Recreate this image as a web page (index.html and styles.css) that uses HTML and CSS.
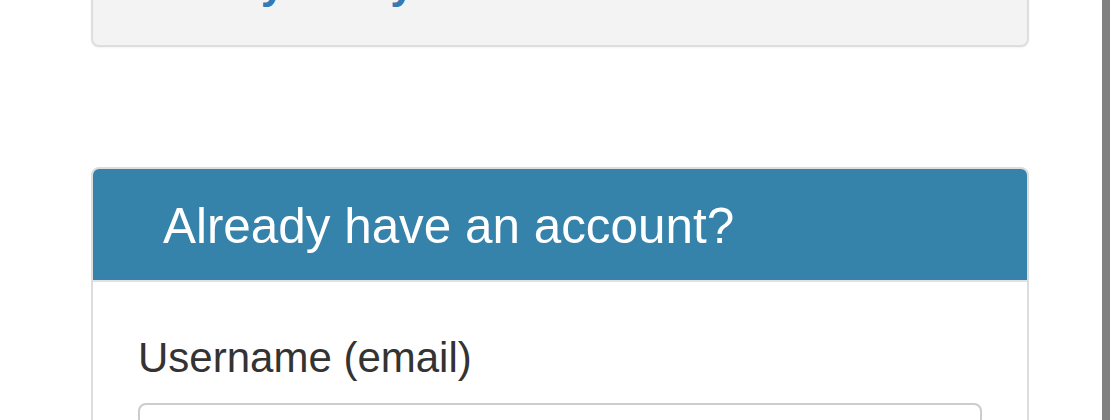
FILE: index.html
```html
<!DOCTYPE html>
<html lang="en">
<head>
<meta charset="utf-8">
<title>Login</title>
<link rel="stylesheet" href="styles.css">
</head>
<body>
<div class="page">
  <div class="well">
    <h2 class="well-title"><a href="#">Study today</a></h2>
  </div>
  <div class="panel">
    <div class="panel-heading">
      <h3 class="panel-title">Already have an account?</h3>
    </div>
    <div class="panel-body">
      <label class="field-label" for="user">Username (email)</label>
      <input class="field-input" id="user" type="text">
    </div>
  </div>
</div>
<div class="scrollbar"></div>
</body>
</html>
```

FILE: styles.css
```css
html, body {
  margin: 0;
  padding: 0;
  background: #ffffff;
  overflow: hidden;
}

body {
  font-family: "Liberation Sans", Arial, Helvetica, sans-serif;
  color: #333333;
}

.page {
  width: 938px;
  padding-left: 91px;
}

.well {
  margin-top: -81px;
  padding: 38px 70px 38px;
  background: #f3f3f3;
  border: 2px solid #dedede;
  border-radius: 8px;
  box-shadow: inset 0 2px 2px rgba(0, 0, 0, 0.05), 0 1px 2px rgba(0, 0, 0, 0.05);
}

.well-title {
  margin: 0;
  font-size: 44px;
  line-height: 1.1;
  font-weight: 700;
}

.well-title a {
  color: #337ab7;
  text-decoration: none;
}

.panel {
  margin-top: 120px;
  border: 2px solid #dddddd;
  border-radius: 8px;
  overflow: hidden;
}

.panel-heading {
  background: #3582aa;
  padding: 30px 70px 26px;
  border-bottom: 2px solid #dde2e6;
}

.panel-title {
  margin: 0;
  font-size: 49.4px;
  line-height: 1.1;
  font-weight: 400;
  color: #ffffff;
}

.panel-body {
  padding: 51px 45px 60px;
  background: #ffffff;
}

.field-label {
  display: block;
  margin-bottom: 20px;
  font-size: 42px;
  line-height: 1.2;
  font-weight: 400;
  color: #333333;
}

.field-input {
  display: block;
  box-sizing: border-box;
  width: 100%;
  height: 80px;
  border: 2px solid #cccccc;
  border-radius: 8px;
  background: #ffffff;
}

.scrollbar {
  position: fixed;
  top: 0;
  right: 10px;
  width: 8px;
  height: 100%;
  background: #808080;
}
```
